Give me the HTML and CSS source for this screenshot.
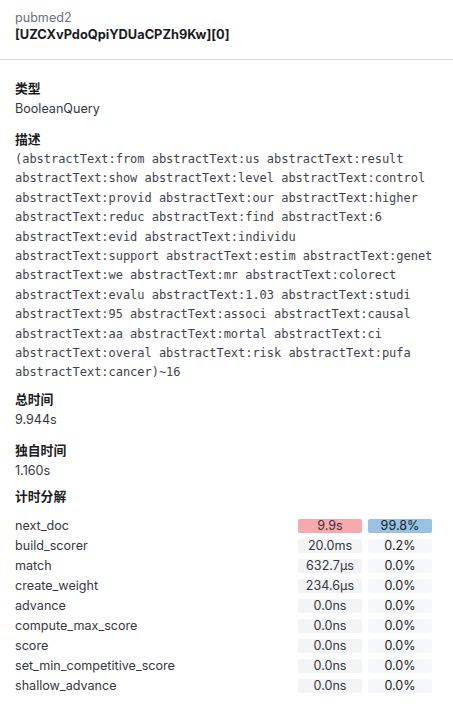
FILE: index.html
```html
<!DOCTYPE html>
<html lang="zh">
<head>
<meta charset="utf-8">
<title>Profile</title>
<link rel="stylesheet" href="styles.css">
</head>
<body>
<div class="panel">
  <header class="header">
    <div class="index">pubmed2</div>
    <div class="shard">[UZCXvPdoQpiYDUaCPZh9Kw][0]</div>
  </header>
  <main class="content">
    <section class="section">
      <h3 class="label">类型</h3>
      <div class="value">BooleanQuery</div>
    </section>
    <section class="section">
      <h3 class="label">描述</h3>
      <div class="code">(abstractText:from abstractText:us abstractText:result
abstractText:show abstractText:level abstractText:control
abstractText:provid abstractText:our abstractText:higher
abstractText:reduc abstractText:find abstractText:6
abstractText:evid abstractText:individu
abstractText:support abstractText:estim abstractText:genet
abstractText:we abstractText:mr abstractText:colorect
abstractText:evalu abstractText:1.03 abstractText:studi
abstractText:95 abstractText:associ abstractText:causal
abstractText:aa abstractText:mortal abstractText:ci
abstractText:overal abstractText:risk abstractText:pufa
abstractText:cancer)~16</div>
    </section>
    <section class="section tight">
      <h3 class="label">总时间</h3>
      <div class="value">9.944s</div>
    </section>
    <section class="section">
      <h3 class="label">独自时间</h3>
      <div class="value">1.160s</div>
    </section>
    <section class="section tight">
      <h3 class="label">计时分解</h3>
      <div class="breakdown">
        <div class="row"><span class="name">next_doc</span><span class="badge time hot">9.9s</span><span class="badge pct hot-pct">99.8%</span></div>
        <div class="row"><span class="name">build_scorer</span><span class="badge time">20.0ms</span><span class="badge pct">0.2%</span></div>
        <div class="row"><span class="name">match</span><span class="badge time">632.7µs</span><span class="badge pct">0.0%</span></div>
        <div class="row"><span class="name">create_weight</span><span class="badge time">234.6µs</span><span class="badge pct">0.0%</span></div>
        <div class="row"><span class="name">advance</span><span class="badge time">0.0ns</span><span class="badge pct">0.0%</span></div>
        <div class="row"><span class="name">compute_max_score</span><span class="badge time">0.0ns</span><span class="badge pct">0.0%</span></div>
        <div class="row"><span class="name">score</span><span class="badge time">0.0ns</span><span class="badge pct">0.0%</span></div>
        <div class="row"><span class="name">set_min_competitive_score</span><span class="badge time">0.0ns</span><span class="badge pct">0.0%</span></div>
        <div class="row"><span class="name">shallow_advance</span><span class="badge time">0.0ns</span><span class="badge pct">0.0%</span></div>
      </div>
    </section>
  </main>
</div>
</body>
</html>
```

FILE: styles.css
```css
* { box-sizing: border-box; }

html, body {
  margin: 0;
  padding: 0;
  background: #ffffff;
}

body {
  font-family: Inter, "Noto Sans CJK SC", sans-serif;
  font-size: 12.6px;
  color: #343741;
}

.header {
  padding: 9px 15px 16px;
  border-bottom: 1px solid #D3DAE6;
}

.index {
  line-height: 17px;
  color: #69707D;
}

.shard {
  font-size: 12.8px;
  font-weight: 700;
  line-height: 17px;
  color: #1A1C21;
}

.content {
  padding: 19px 21px 0 15px;
}

.section {
  margin-top: 12px;
}

.section:first-child {
  margin-top: 0;
}

.section.tight {
  margin-top: 7px;
}

.label {
  margin: 0;
  font-size: 12.8px;
  font-weight: 700;
  line-height: 20px;
  color: #1A1C21;
  font-family: Inter, "Noto Sans CJK SC", sans-serif;
}

.value {
  line-height: 19px;
}

.code {
  font-family: "DejaVu Sans Mono", monospace;
  font-size: 12px;
  line-height: 19.4px;
  white-space: pre;
  letter-spacing: -0.03px;
  color: #3F434D;
}

.breakdown {
  margin-top: 9px;
  display: flex;
  flex-direction: column;
}

.row {
  display: flex;
  align-items: center;
  height: 20px;
  gap: 6px;
}

.name {
  flex: 1;
  line-height: 20px;
}

.badge {
  width: 64px;
  height: 14px;
  line-height: 14px;
  text-align: center;
  border-radius: 2px;
  font-size: 12.6px;
}

.time {
  background: #F3F4F6;
  color: #343741;
}

.pct {
  background: #F5F7FA;
  color: #1A1C21;
}

.hot {
  background: #F8A9AB;
}

.hot-pct {
  background: #98C2E3;
}
```
